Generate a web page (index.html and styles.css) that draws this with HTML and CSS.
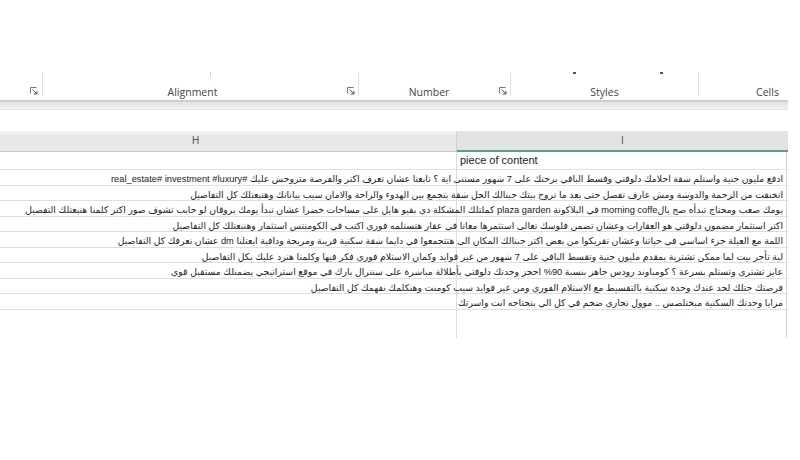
FILE: index.html
```html
<!DOCTYPE html>
<html lang="en">
<head>
<meta charset="utf-8">
<title>Sheet</title>
<link rel="stylesheet" href="styles.css">
</head>
<body>
<div class="ribbon">
  <div class="groups">
    <div class="group g-font">
      <span class="label"></span>
      <svg class="launcher" viewBox="0 0 8 8" width="8" height="8"><path d="M0.5 6.5V0.5H6.5" fill="none" stroke="#777" stroke-width="1"/><path d="M2.5 2.5L7 7M7 3.8V7H3.8" fill="none" stroke="#555" stroke-width="1"/></svg>
    </div>
    <div class="group g-align">
      <span class="tick"></span>
      <span class="label">Alignment</span>
      <svg class="launcher" viewBox="0 0 8 8" width="8" height="8"><path d="M0.5 6.5V0.5H6.5" fill="none" stroke="#777" stroke-width="1"/><path d="M2.5 2.5L7 7M7 3.8V7H3.8" fill="none" stroke="#555" stroke-width="1"/></svg>
    </div>
    <div class="group g-number">
      <span class="label">Number</span>
      <svg class="launcher" viewBox="0 0 8 8" width="8" height="8"><path d="M0.5 6.5V0.5H6.5" fill="none" stroke="#777" stroke-width="1"/><path d="M2.5 2.5L7 7M7 3.8V7H3.8" fill="none" stroke="#555" stroke-width="1"/></svg>
    </div>
    <div class="group g-styles">
      <span class="mark m1"></span><span class="mark m2"></span>
      <span class="label">Styles</span>
    </div>
    <div class="group g-cells">
      <span class="label">Cells</span>
    </div>
  </div>
</div>
<div class="ribbon-edge"></div>
<div class="formula-gap"></div>
<div class="sheet">
  <div class="col-head">
    <div class="ch ch-h">H</div>
    <div class="ch ch-i">I</div>
  </div>
  <div class="row first"><div class="cell h"></div><div class="cell i ltr">piece of content</div></div>
  <div class="row"><div class="cell h"></div><div class="cell i" dir="rtl">ادفع مليون جنية واستلم شقة احلامك دلوقتي وقسط الباقي برحتك على 7 شهور مستنى اية ؟  تابعنا عشان تعرف اكتر والفرصة متروحش عليك  #real_estate# investment #luxury</div></div>
  <div class="row"><div class="cell h"></div><div class="cell i" dir="rtl">اتخنقت من  الزحمة والدوشة ومش عارف تفصل حتى بعد ما تروح بيتك جبنالك الحل شقة بتجمع بين الهدوء والراحة والامان سيب بياناتك وهنبعتلك كل التفاصيل</div></div>
  <div class="row"><div class="cell h"></div><div class="cell i" dir="rtl">يومك صعب ومحتاج تبدأه صح بالmorning coffe في البلاكونة plaza garden كملتلك المشكلة دي بفيو هايل على مساحات خضرا عشان تبدأ يومك بروقان لو حابب تشوف صور اكتر كلمنا هنبعتلك التفصيل</div></div>
  <div class="row"><div class="cell h"></div><div class="cell i" dir="rtl">اكتر استثمار مضمون دلوقتي هو العقارات وعشان تضمن فلوسك تعالى استثمرها معانا في عقار هتستلمه فوري اكتب في الكومنتس استثمار وهنبعتلك كل التفاصيل</div></div>
  <div class="row"><div class="cell h"></div><div class="cell i" dir="rtl">اللمة مع العيلة جزء اساسي في حياتنا وعشان تقربكوا من بعض اكتر جبنالك المكان الى هتتجمعوا في دايما شقة سكنية قريبة ومريحة ودافية ابعتلنا dm عشان نعرفك كل التفاصيل</div></div>
  <div class="row"><div class="cell h"></div><div class="cell i" dir="rtl">لية تأجر بيت لما ممكن تشترية بمقدم مليون جنية وتقسط الباقي على 7 شهور من غير فوايد  وكمان الاستلام فوري فكر فيها وكلمنا هنرد عليك بكل التفاصيل</div></div>
  <div class="row"><div class="cell h"></div><div class="cell i" dir="rtl">عايز تشتري وتستلم بسرعة ؟ كومباوند رودس جاهز بنسبة 90% احجز وحدتك دلوقتي بأطلالة مباشرة على سنترال بارك في موقع استراتيجي يضمنلك مستقبل قوي</div></div>
  <div class="row"><div class="cell h"></div><div class="cell i" dir="rtl">فرصتك جتلك لحد عندك وحدة سكنية بالتقسيط مع الاستلام الفوري ومن غير فوايد سيب كومنت وهنكلمك نفهمك كل التفاصيل</div></div>
  <div class="row"><div class="cell h"></div><div class="cell i" dir="rtl">مزايا  وحدتك السكنية مبختلصش .. موول تجاري ضخم في كل الي بتحتاجه انت واسرتك</div></div>
  <div class="row tail"><div class="cell h"></div><div class="cell i"></div></div>
</div>
</body>
</html>
```

FILE: styles.css
```css
html, body {
  margin: 0;
  padding: 0;
  background: #ffffff;
}
body {
  width: 800px;
  height: 460px;
  overflow: hidden;
  font-family: "Open Sans", "Noto Sans", sans-serif;
  color: #333;
}
.ribbon {
  height: 100px;
  box-sizing: border-box;
  padding-top: 72px;
}
.groups {
  display: flex;
  height: 24px;
}
.group {
  position: relative;
  display: flex;
  align-items: flex-end;
  box-sizing: border-box;
  border-left: 1px solid #e0e0e0;
}
.g-font { width: 42px; border-left: none; }
.g-align { width: 316px; }
.g-number { width: 152px; }
.g-styles { width: 188px; }
.g-cells { width: 102px; padding-left: 36px; }
.label {
  flex: 1;
  text-align: center;
  font-size: 10.5px;
  line-height: 14px;
  color: #444;
  margin-bottom: -3px;
}
.g-align .label { padding-right: 5px; }
.launcher {
  flex: none;
  margin: 0 3px 1px 0;
}
.g-font .launcher { margin-right: 4px; }
.tick {
  position: absolute;
  left: 167px;
  top: 0;
  width: 1px;
  height: 5px;
  background: #cfcfcf;
}
.mark {
  position: absolute;
  top: 0;
  width: 3px;
  height: 2px;
  background: #555;
}
.m1 { left: 62px; }
.m2 { left: 149px; }
.ribbon-edge {
  width: 788px;
  height: 10px;
  box-sizing: border-box;
  border-top: 2px solid #cdcdcd;
  border-bottom: 1px solid #e3e3e3;
  background: linear-gradient(#e2e2e2, #f2f2f2);
}
.formula-gap {
  height: 21px;
}
.sheet {
  width: 788px;
  font-family: "Liberation Sans", "DejaVu Sans", sans-serif;
}
.col-head {
  display: flex;
  height: 21px;
  box-sizing: border-box;
  background: linear-gradient(#f4f4f4, #e8e8e8 30%);
  border-bottom: 1px solid #c9c9c9;
}
.ch {
  box-sizing: border-box;
  font-size: 10px;
  line-height: 20px;
  color: #555;
  text-align: center;
}
.ch-h {
  width: 457px;
  padding-right: 65px;
  border-right: 1px solid #d0d0d0;
}
.ch-i {
  width: 331px;
  background: #e3e3e3;
  border-bottom: 2px solid #5aa37a;
  margin-bottom: -1px;
}
.row {
  display: flex;
  height: 15.5px;
  box-sizing: border-box;
  border-bottom: 1px solid #dedede;
}
.row.first { height: 18px; }
.row.tail { height: 28px; border-bottom: none; }
.cell {
  box-sizing: border-box;
  height: 100%;
}
.cell.h {
  width: 457px;
  border-right: 1px solid #dcdcdc;
}
.cell.i {
  width: 330px;
  border-right: 1px solid #d6d6d6;
  white-space: nowrap;
  font-size: 9.3px;
  line-height: 12px;
  padding: 3px 3px 0;
  color: #222;
  overflow: visible;
  text-align: right;
}
.cell.ltr {
  text-align: left;
  font-size: 11px;
  line-height: 17px;
  padding-top: 0;
  color: #222;
}
```
